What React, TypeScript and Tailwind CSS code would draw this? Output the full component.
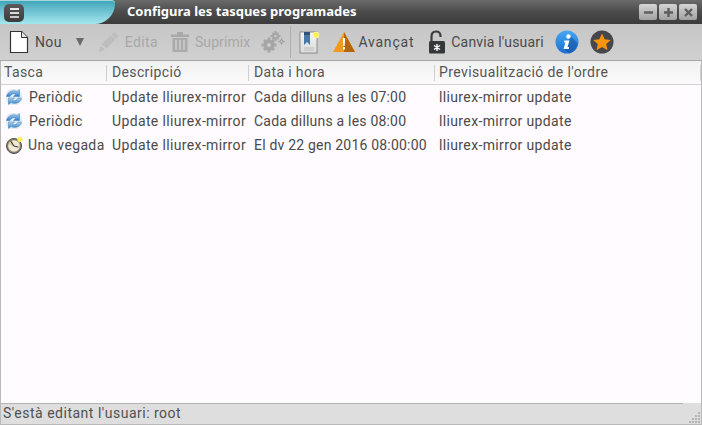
import React from "react";

const font = { fontFamily: '"Roboto", "Liberation Sans", sans-serif' };

const rows = [
  { icon: "sync", task: "Periòdic", desc: "Update lliurex-mirror", date: "Cada dilluns a les 07:00", cmd: "lliurex-mirror update" },
  { icon: "sync", task: "Periòdic", desc: "Update lliurex-mirror", date: "Cada dilluns a les 08:00", cmd: "lliurex-mirror update" },
  { icon: "clock", task: "Una vegada", desc: "Update lliurex-mirror", date: "El dv 22 gen 2016 08:00:00", cmd: "lliurex-mirror update" },
];

const SyncIcon = () => (
  <svg width="18" height="18" viewBox="0 0 18 18" className="shrink-0">
    <defs>
      <linearGradient id="sy" x1="0" y1="0" x2="0" y2="1">
        <stop offset="0" stopColor="#b5d4f0" />
        <stop offset="1" stopColor="#2f7fc9" />
      </linearGradient>
    </defs>
    <rect x="1" y="1" width="16" height="16" rx="6" fill="#e4ecf4" />
    <path d="M1.500 8.500C2.500 3.500 8 1.500 12 3.400L14.500 1.500V8.500H8.500L10.800 6.200C8.500 5 6 6 5 8.500Z" fill="url(#sy)" stroke="#3f7fb8" strokeWidth=".5" />
    <path d="M16.500 10C15.500 15 10 16.500 6 14.600L3.500 16.500V10H9.500L7.200 12.200C9.500 13.400 12 12.400 13 10Z" fill="url(#sy)" stroke="#3f7fb8" strokeWidth=".5" />
  </svg>
);

const ClockIcon = () => (
  <svg width="18" height="18" viewBox="0 0 18 18" className="shrink-0">
    <circle cx="9" cy="10" r="7.500" fill="#8d8778" stroke="#4c4a42" />
    <circle cx="9" cy="10" r="5.800" fill="#f0ead8" />
    <path d="M4 8L8 5V10Z" fill="#d8b84a" opacity=".7" />
    <path d="M9 10L6 5.500M9 10L13 11" stroke="#444" strokeWidth="1.200" strokeLinecap="round" />
    <circle cx="15" cy="3.500" r="2.500" fill="#fff04a" stroke="#f5e9a0" strokeWidth=".5" />
  </svg>
);

const NewIcon = () => (
  <svg width="20" height="24" viewBox="0 0 20 24" className="shrink-0">
    <path d="M1.500 1.500H12.500L18.500 7.500V22.500H1.500Z" fill="#fff" stroke="#333" strokeWidth="1.200" strokeLinejoin="round" />
    <path d="M12.500 1.500V7.500H18.500" fill="#e8e8e8" stroke="#333" strokeWidth="1" />
  </svg>
);

const PencilIcon = () => (
  <svg width="22" height="22" viewBox="0 0 22 22" className="shrink-0">
    <path d="M1 21L3 14L15 2C17 1 20 4 20 6L8 18Z" fill="#bdbdbd" />
    <path d="M3 14L8 18" stroke="#d4d4d4" strokeWidth="1.500" />
    <path d="M13 4L18 8.500" stroke="#d0d0d0" strokeWidth="1" />
  </svg>
);

const TrashIcon = () => (
  <svg width="18" height="20" viewBox="0 0 18 20" className="shrink-0">
    <path d="M0 2.500H18V5H0Z M6 0H12V2.500H6Z" fill="#a9a9a9" />
    <path d="M1.500 6H16.500V20H1.500Z" fill="#ababab" />
    <path d="M5 8V18M9 8V18M13 8V18" stroke="#d0d0d0" strokeWidth="1.500" />
  </svg>
);

const GearsIcon = () => (
  <svg width="24" height="22" viewBox="0 0 24 22" className="shrink-0">
    <g fill="#a6a6a6">
      <circle cx="8" cy="14" r="5.500" />
      <path d="M6.500 6.500H9.500V21.500H6.500ZM.5 12.500H15.500V15.500H.5ZM2 10L4 8L14 18L12 20ZM12 8L14 10L4 20L2 18Z" />
      <circle cx="14.500" cy="5" r="3.500" />
      <path d="M13.500 0H15.500V10H13.500ZM9.500 4H19.500V6H9.500ZM11 2L12 1L18 8L17 9ZM17 1L18 2L12 9L11 8Z" />
      <circle cx="20.500" cy="10.500" r="2.200" />
      <path d="M20 7H21V14H20ZM17 10H24V11H17Z" />
    </g>
    <circle cx="8" cy="14" r="2" fill="#cbcbcb" />
    <circle cx="14.500" cy="5" r="1.300" fill="#cbcbcb" />
    <circle cx="20.500" cy="10.500" r=".8" fill="#cbcbcb" />
  </svg>
);

const BookmarkIcon = () => (
  <svg width="22" height="25" viewBox="0 0 22 25" className="shrink-0">
    <defs>
      <linearGradient id="bk" x1="0" y1="0" x2="0" y2="1">
        <stop offset="0" stopColor="#f4f4f4" />
        <stop offset="1" stopColor="#dcdcdc" />
      </linearGradient>
    </defs>
    <rect x="1" y="2" width="17" height="21" fill="url(#bk)" stroke="#7b7b7b" strokeWidth=".8" />
    <path d="M5 2H11V15L8 12L5 15Z" fill="#4b77a8" />
    <rect x="5" y="2" width="6" height="3" fill="#32507a" />
    <rect x="5" y="17" width="10" height="4" fill="#cfcfcf" />
    <circle cx="17" cy="5" r="3" fill="#fdf04a" stroke="#f8f3a8" />
  </svg>
);

const WarningIcon = () => (
  <svg width="22" height="20" viewBox="0 0 22 20" className="shrink-0">
    <path d="M11 0L22 20H0Z" fill="#f39a1c" />
    <path d="M11 0L22 20H11Z" fill="#b4660f" />
    <path d="M9.800 6H12.200L11.700 14H10.300Z" fill="#fff" />
    <rect x="10" y="15" width="2" height="2.500" fill="#fff" />
  </svg>
);

const LockIcon = () => (
  <svg width="18" height="24" viewBox="0 0 18 24" className="shrink-0">
    <path d="M3.500 11V6.500C3.500 3 5.500 1.500 8 1.500S12.500 3 12.500 6V7" fill="none" stroke="#3a3c40" strokeWidth="2.200" />
    <rect x="1" y="11" width="16" height="12.500" rx="1.500" fill="#35373b" />
    <path d="M9 14V21M6 15.500L12 19.500M12 15.500L6 19.500" stroke="#fff" strokeWidth="1.400" />
  </svg>
);

const InfoIcon = () => (
  <svg width="24" height="24" viewBox="0 0 24 24" className="shrink-0">
    <defs>
      <linearGradient id="inf" x1="0" y1="0" x2="0" y2="1">
        <stop offset="0" stopColor="#45a8f2" />
        <stop offset="1" stopColor="#1a6fd0" />
      </linearGradient>
    </defs>
    <circle cx="12" cy="12" r="11.500" fill="url(#inf)" />
    <path d="M14 4.500L22.500 13A11.500 11.500 0 0 1 14 23L8.500 19L14 12Z" fill="#14509c" opacity=".55" />
    <circle cx="13.500" cy="6.500" r="2.200" fill="#fff" />
    <path d="M9.500 10.500H14.500L12.500 17H14V19H8.500L10.500 12.500H9Z" fill="#fff" />
  </svg>
);

const StarIcon = () => (
  <svg width="24" height="24" viewBox="0 0 24 24" className="shrink-0">
    <circle cx="12" cy="12" r="11.500" fill="#46474a" />
    <path d="M12 3.500L14.600 9.200L20.800 9.900L16.200 14L17.500 20.200L12 17L6.500 20.200L7.800 14L3.200 9.900L9.400 9.200Z" fill="#f7930e" />
  </svg>
);

const WinButton = ({ d }: { d: string }) => (
  <div className="flex h-[16px] w-[18px] items-center justify-center rounded-[2px] bg-gradient-to-b from-[#d4d4d4] to-[#a2a2a2]">
    <svg width="11" height="11" viewBox="0 0 11 11">
      <path d={d} stroke="#5d5d5d" strokeWidth="2.400" fill="none" />
    </svg>
  </div>
);

const Sep = () => <div className="h-[16px] w-px bg-[#cfcfcf]" />;

export default function App() {
  return (
    <div className="flex h-[425px] w-[702px] flex-col overflow-hidden bg-[#fffbff] text-[14px] tracking-[0.36px] text-[#4a4a4a]" style={font}>
      {/* title bar */}
      <div className="flex h-[24px] shrink-0 items-center bg-gradient-to-b from-[#6b6b6b] via-[#4b4b4b] to-[#3c3c3c]">
        <div className="flex h-[24px] w-[115px] shrink-0 items-center rounded-br-[22px] rounded-tr-[4px] border-t border-[#a8d8de] bg-gradient-to-b from-[#3fa5ba] to-[#a3e7ee] pl-[4px]">
          <div className="flex h-[18px] w-[20px] flex-col items-center justify-center gap-[2px] rounded-[5px] bg-gradient-to-b from-[#5a5a5a] to-[#3c3c3c]">
            <div className="h-[2px] w-[9px] bg-[#e8e8e8]" />
            <div className="h-[2px] w-[9px] bg-[#d8d8d8]" />
            <div className="h-[2px] w-[9px] bg-[#c8c8c8]" />
          </div>
        </div>
        <div className="ml-[12px] flex-1 text-[13px] font-bold tracking-normal text-white" style={{ fontFamily: '"Noto Sans", sans-serif' }}>
          Configura les tasques programades
        </div>
        <div className="mr-[5px] flex gap-[2px]">
          <WinButton d="M1 5.500H10" />
          <WinButton d="M1 5.500H10M5.500 1V10" />
          <WinButton d="M2 2L9 9M9 2L2 9" />
        </div>
      </div>

      {/* toolbar */}
      <div className="flex h-[37px] shrink-0 items-center border-b border-[#a9a9a9] bg-gradient-to-b from-[#c6c6c6] to-[#d0d0d0] pl-[9px]">
        <NewIcon />
        <span className="ml-[6px]">Nou</span>
        <span className="ml-[14px] h-0 w-0 border-x-[4px] border-t-[8px] border-x-transparent border-t-[#6a6a6a]" />
        <div className="ml-[14px] flex items-center gap-[5px] text-[#a8a8a8]">
          <PencilIcon />
          <span>Edita</span>
        </div>
        <div className="ml-[13px] flex items-center gap-[6px] text-[#a8a8a8]">
          <TrashIcon />
          <span className="tracking-[0.1px]">Suprimix</span>
        </div>
        <div className="ml-[11px]"><GearsIcon /></div>
        <div className="ml-[5px] h-[32px] w-px bg-[#aeaeae]" />
        <div className="ml-[8px]"><BookmarkIcon /></div>
        <div className="ml-[12px]"><WarningIcon /></div>
        <span className="ml-[3px] tracking-[0.8px]">Avançat</span>
        <div className="ml-[14px]"><LockIcon /></div>
        <span className="ml-[5px] tracking-[0.16px]">Canvia l'usuari</span>
        <div className="ml-[11px]"><InfoIcon /></div>
        <div className="ml-[11px]"><StarIcon /></div>
      </div>

      {/* list */}
      <div className="flex min-h-0 flex-1 flex-col border-x border-[#b9b9b9]">
        <div className="flex h-[24px] shrink-0 items-center border-b border-[#d4d0d4] bg-gradient-to-b from-[#f1f1f1] to-[#fbfbfb] text-[#555555]">
          <div className="w-[105px] shrink-0 pl-[3px]">Tasca</div>
          <Sep />
          <div className="w-[141px] shrink-0 pl-[5px]">Descripció</div>
          <Sep />
          <div className="w-[185px] shrink-0 pl-[5px]">Data i hora</div>
          <Sep />
          <div className="flex-1 pl-[4px] tracking-[0.4px]">Previsualització de l'ordre</div>
          <Sep />
        </div>
        <div className="flex flex-col">
          {rows.map((r, i) => (
            <div key={i} className="flex h-[24px] items-center">
              <div className="flex w-[106px] shrink-0 items-center pl-[4px]">
                {r.icon === "sync" ? <SyncIcon /> : <ClockIcon />}
                <span className={r.icon === "sync" ? "ml-[6px]" : "ml-[5px]"}>{r.task}</span>
              </div>
              <div className="w-[142px] shrink-0 pl-[5px]">{r.desc}</div>
              <div className="w-[186px] shrink-0 pl-[5px] tracking-[0.2px]">{r.date}</div>
              <div className="flex-1 pl-[4px]">{r.cmd}</div>
            </div>
          ))}
        </div>
      </div>

      {/* status bar */}
      <div className="relative flex h-[22px] shrink-0 items-center border border-t-0 border-[#b9b9b9] bg-[#dedede] pl-[2px] tracking-[0.5px] text-[#505050]">
        <div className="absolute left-0 right-[18px] top-0 h-px bg-[#b4b4b4]" />
        <span>S'està editant l'usuari: root</span>
        <div className="absolute bottom-[1px] right-[1px] grid grid-cols-4 gap-[1px]">
          {[0, 0, 0, 1, 0, 0, 1, 1, 0, 1, 1, 1, 1, 1, 1, 1].map((on, i) => (
            <div key={i} className={on ? "h-[2px] w-[2px] bg-[#b4b4b4]" : "h-[2px] w-[2px]"} />
          ))}
        </div>
      </div>
    </div>
  );
}
